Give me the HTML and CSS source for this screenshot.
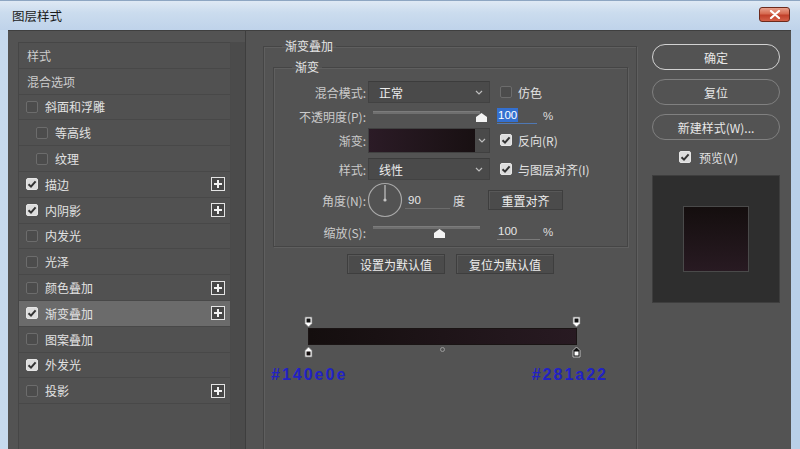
FILE: index.html
```html
<!DOCTYPE html>
<html lang="zh">
<head>
<meta charset="utf-8">
<title>图层样式</title>
<link rel="stylesheet" href="styles.css">
</head>
<body>
<div class="window">
  <div class="titlebar">
    <span class="title">图层样式</span>
    <span class="close"><svg width="12" height="9" viewBox="0 0 12 9"><path d="M2 1 L10 8 M10 1 L2 8" stroke="#fff" stroke-width="2.2" stroke-linecap="round"/></svg></span>
  </div>
  <div class="frame">
    <div class="main">
      <div class="left">
        <div class="list">
          <div class="row plain">样式</div>
          <div class="row plain">混合选项</div>
          <div class="row"><span class="cb"></span>斜面和浮雕</div>
          <div class="row sub"><span class="cb"></span>等高线</div>
          <div class="row sub"><span class="cb"></span>纹理</div>
          <div class="row"><span class="cb on"><svg width="12" height="12" viewBox="0 0 12 12"><path d="M2.5 6.2 L5 8.6 L9.6 3.4" fill="none" stroke="#333" stroke-width="2"/></svg></span>描边<span class="plus"></span></div>
          <div class="row"><span class="cb on"><svg width="12" height="12" viewBox="0 0 12 12"><path d="M2.5 6.2 L5 8.6 L9.6 3.4" fill="none" stroke="#333" stroke-width="2"/></svg></span>内阴影<span class="plus"></span></div>
          <div class="row"><span class="cb"></span>内发光</div>
          <div class="row"><span class="cb"></span>光泽</div>
          <div class="row"><span class="cb"></span>颜色叠加<span class="plus"></span></div>
          <div class="row selected"><span class="cb on"><svg width="12" height="12" viewBox="0 0 12 12"><path d="M2.5 6.2 L5 8.6 L9.6 3.4" fill="none" stroke="#333" stroke-width="2"/></svg></span>渐变叠加<span class="plus"></span></div>
          <div class="row"><span class="cb"></span>图案叠加</div>
          <div class="row"><span class="cb on"><svg width="12" height="12" viewBox="0 0 12 12"><path d="M2.5 6.2 L5 8.6 L9.6 3.4" fill="none" stroke="#333" stroke-width="2"/></svg></span>外发光</div>
          <div class="row"><span class="cb"></span>投影<span class="plus"></span></div>
        </div>
        <div class="scroll"></div>
      </div>

      <div class="center">
        <fieldset class="group outer">
          <legend>渐变叠加</legend>
          <fieldset class="group inner">
            <legend>渐变</legend>
            <div class="frow r1">
              <span class="lbl">混合模式:</span>
              <span class="select"><span>正常</span><svg class="chev" width="8" height="5" viewBox="0 0 8 5"><path d="M1 1 L4 4 L7 1" fill="none" stroke="#bdbdbd" stroke-width="1.2"/></svg></span>
              <span class="cb cb-r"></span><span class="clbl">仿色</span>
            </div>
            <div class="frow r2">
              <span class="lbl">不透明度(P):</span>
              <span class="slider"><span class="track"></span><span class="thumb t-op"></span></span>
              <span class="num num-op"><span class="hl">100</span></span><span class="pct">%</span>
            </div>
            <div class="frow r3">
              <span class="lbl">渐变:</span>
              <span class="swatch"><span class="grad"></span><span class="drop"><svg width="8" height="5" viewBox="0 0 8 5"><path d="M1 1 L4 4 L7 1" fill="none" stroke="#bdbdbd" stroke-width="1.2"/></svg></span></span>
              <span class="cb on cb-r"><svg width="12" height="12" viewBox="0 0 12 12"><path d="M2.5 6.2 L5 8.6 L9.6 3.4" fill="none" stroke="#333" stroke-width="2"/></svg></span><span class="clbl">反向(R)</span>
            </div>
            <div class="frow r4">
              <span class="lbl">样式:</span>
              <span class="select"><span>线性</span><svg class="chev" width="8" height="5" viewBox="0 0 8 5"><path d="M1 1 L4 4 L7 1" fill="none" stroke="#bdbdbd" stroke-width="1.2"/></svg></span>
              <span class="cb on cb-r"><svg width="12" height="12" viewBox="0 0 12 12"><path d="M2.5 6.2 L5 8.6 L9.6 3.4" fill="none" stroke="#333" stroke-width="2"/></svg></span><span class="clbl">与图层对齐(I)</span>
            </div>
            <div class="frow r5">
              <span class="lbl">角度(N):</span>
              <svg class="dial" width="36" height="36" viewBox="0 0 36 36"><circle cx="18" cy="18" r="16.5" fill="none" stroke="#a9a9a9" stroke-width="1.2"/><path d="M18 3 L18 17" stroke="#c4c4c4" stroke-width="1.2"/><circle cx="18" cy="18" r="1.6" fill="#c4c4c4"/></svg>
              <span class="num num-ang">90</span><span class="deg">度</span>
              <span class="btn btn-align">重置对齐</span>
            </div>
            <div class="frow r6">
              <span class="lbl">缩放(S):</span>
              <span class="slider"><span class="track"></span><span class="thumb t-sc"></span></span>
              <span class="num num-sc">100</span><span class="pct">%</span>
            </div>
          </fieldset>
          <div class="defaults">
            <span class="btn btn-def">设置为默认值</span>
            <span class="btn btn-def">复位为默认值</span>
          </div>
          <div class="editor">
            <div class="bar"></div>
            <svg class="stop top-l" width="9" height="12" viewBox="0 0 9 12"><path d="M1 1 H8 V7.5 L4.5 11 L1 7.5 Z" fill="#fff" stroke="#777" stroke-width="0.8"/><rect x="2.5" y="2.5" width="4" height="4" fill="#111"/></svg>
            <svg class="stop top-r" width="9" height="12" viewBox="0 0 9 12"><path d="M1 1 H8 V7.5 L4.5 11 L1 7.5 Z" fill="#fff" stroke="#777" stroke-width="0.8"/><rect x="2.5" y="2.5" width="4" height="4" fill="#111"/></svg>
            <svg class="stop bot-l" width="9" height="12" viewBox="0 0 9 12"><path d="M4.5 1 L8 4.5 V11 H1 V4.5 Z" fill="#fff" stroke="#777" stroke-width="0.8"/><rect x="2.5" y="5.5" width="4" height="4" fill="#140e0e"/></svg>
            <svg class="stop bot-r" width="9" height="12" viewBox="0 0 9 12"><path d="M4.5 1 L8 4.5 V11 H1 V4.5 Z" fill="#111" stroke="#ddd" stroke-width="0.8"/><rect x="2.5" y="5.5" width="4" height="4" fill="#fff"/></svg>
            <span class="mid"></span>
          </div>
          <div class="hexes"><span>#140e0e</span><span>#281a22</span></div>
        </fieldset>
      </div>

      <div class="right">
        <span class="pill primary">确定</span>
        <span class="pill">复位</span>
        <span class="pill">新建样式(W)...</span>
        <div class="preview-row">
          <span class="cb on"><svg width="12" height="12" viewBox="0 0 12 12"><path d="M2.5 6.2 L5 8.6 L9.6 3.4" fill="none" stroke="#333" stroke-width="2"/></svg></span><span class="clbl">预览(V)</span>
        </div>
        <div class="preview"><div class="square"></div></div>
      </div>
    </div>
  </div>
</div>
</body>
</html>
```

FILE: styles.css
```css
* { box-sizing: border-box; }
html, body { margin: 0; padding: 0; }
body {
  width: 800px;
  height: 449px;
  overflow: hidden;
  font-family: "Noto Sans CJK SC", "Noto Sans", sans-serif;
  font-size: 12px;
  color: #dedede;
  background: #c3d6ec;
}
.window {
  width: 800px;
  height: 449px;
  display: flex;
  flex-direction: column;
  overflow: hidden;
}
.titlebar {
  height: 30px;
  flex: none;
  display: flex;
  align-items: center;
  padding: 0 10px 0 12px;
  background: linear-gradient(to bottom, #dfe9f4 0%, #cbdcee 40%, #bfd3ea 100%);
  border-top: 1px solid #8ea6c2;
}
.title {
  color: #1a1a1a;
  font-size: 12.5px;
  line-height: 16px;
  margin-top: 1px;
}
.close {
  margin-left: auto;
  width: 31px;
  height: 15px;
  margin-top: -3px;
  border-radius: 3px;
  border: 1px solid #6d2a1c;
  background: linear-gradient(to bottom, #e8a08c 0%, #d66a50 45%, #c1402a 55%, #d36048 100%);
  display: flex;
  align-items: center;
  justify-content: center;
}
.frame {
  flex: 1;
  display: flex;
  padding: 0 9px 0 8px;
  background: linear-gradient(to right, #c7daee, #b9cfe8);
}
.main {
  flex: 1;
  display: flex;
  background: #535353;
  border-top: 1px solid #3f3f3f;
  min-height: 0;
}

/* left list */
.left {
  width: 238px;
  flex: none;
  display: flex;
  padding: 11px 0 0 10px;
  border-right: 1px solid #3e3e3e;
}
.list {
  width: 212px;
  background: #515151;
  border-left: 1px solid #464646;
  border-top: 1px solid #464646;
}
.scroll {
  width: 15px;
  background: #4b4b4b;
  border-left: 1px solid #4a4a4a;
}
.row {
  height: 25.8px;
  display: flex;
  align-items: center;
  padding: 0 5px 0 7px;
  border-bottom: 1px solid #484848;
  color: #e2e2e2;
  white-space: nowrap;
}
.row.plain { padding-left: 8px; color: #cdcdcd; }
.row.sub { padding-left: 17px; }
.row.selected { background: #6b6b6b; }
.row .cb { margin-right: 7px; }

.cb {
  width: 12px;
  height: 12px;
  flex: none;
  border-radius: 2px;
  border: 1px solid #6c6c6c;
  background: #4c4c4c;
  display: inline-block;
  position: relative;
}
.cb.on {
  background: #dcdcdc;
  border-color: #e6e6e6;
}
.cb svg { display: block; margin: -1px 0 0 -1px; }
.plus {
  margin-left: auto;
  width: 14px;
  height: 14px;
  flex: none;
  border: 1.5px solid #e4e4e4;
  background:
    linear-gradient(#f2f2f2, #f2f2f2) center / 8px 2px no-repeat,
    linear-gradient(#f2f2f2, #f2f2f2) center / 2px 8px no-repeat,
    #474747;
}

/* center */
.center {
  width: 374px;
  flex: none;
  margin-left: 17px;
  margin-top: 7px;
}
.group {
  margin: 0;
  min-width: 0;
  padding: 0;
  border: 1px solid #454545;
  box-shadow: inset 1px 1px 0 #5f5f5f, 1px 1px 0 #5f5f5f;
}
.group legend {
  padding: 0 3px;
  margin-left: 18px;
  line-height: 16px;
  color: #e4e4e4;
}
.outer {
  height: 460px;
}
.inner {
  margin: 5px 8px 0 9px;
  padding: 6px 0 4px 0;
}
.frow {
  display: flex;
  align-items: center;
  color: #e0e0e0;
  white-space: nowrap;
}
.r1 { height: 22px; margin-bottom: 2px; }
.r2 { height: 22px; margin-bottom: 1px; }
.r3 { height: 24px; margin-bottom: 6px; }
.r4 { height: 22px; margin-bottom: 3px; }
.r5 { height: 34px; margin-bottom: 5px; }
.r6 { height: 20px; }
.lbl {
  width: 92px;
  flex: none;
  text-align: right;
  margin-right: 2px;
  color: #cacaca;
}
.select {
  width: 122px;
  height: 22px;
  flex: none;
  display: flex;
  align-items: center;
  padding: 0 6px 0 10px;
  background: #4a4a4a;
  border: 1px solid #424242;
  border-top-color: #3c3c3c;
  color: #ececec;
}
.chev { margin-left: auto; }
.cb-r { margin-left: 10px; }
.clbl { margin-left: 6px; color: #e2e2e2; }
.slider {
  width: 122px;
  height: 22px;
  flex: none;
  position: relative;
}
.track {
  position: absolute;
  left: 5px;
  top: 6px;
  width: 107px;
  height: 3px;
  background: #6f6f6f;
  border-top: 1px solid #7c7c7c;
}
.thumb {
  position: absolute;
  top: 8px;
  width: 11px;
  height: 9px;
  background: #f4f4f4;
  clip-path: polygon(50% 0, 100% 45%, 100% 100%, 0 100%, 0 45%);
}
.t-op { left: 108px; }
.r6 .slider { height: 20px; }
.r6 .track { top: 4px; }
.t-sc { left: 66px; top: 7px; }
.num {
  flex: none;
  height: 16px;
  line-height: 15px;
  border-bottom: 1px solid #7a7a7a;
  color: #e6e6e6;
  font-family: "Liberation Sans", sans-serif;
  font-size: 11.5px;
}
.num-op { width: 40px; margin-left: 7px; border-bottom-color: #4f78b4; }
.hl { background: #3470d0; color: #fff; padding: 0 1px; display: inline-block; line-height: 14px; }
.num-sc { width: 43px; margin-left: 7px; padding-left: 1px; }
.pct { margin-left: 6px; color: #dedede; font-family: "Liberation Sans", sans-serif; font-size: 11.5px; }
.r6 .pct { margin-left: 3px; }
.swatch {
  width: 122px;
  height: 25px;
  flex: none;
  display: flex;
  background: #4a4a4a;
  border: 1px solid #404040;
}
.grad {
  width: 106px;
  background: linear-gradient(to right, #2b1b26, #181012);
}
.drop {
  flex: 1;
  display: flex;
  align-items: center;
  justify-content: center;
}
.dial { flex: none; margin-left: -1px; }
.num-ang { width: 45px; margin-left: 2px; padding-left: 3px; margin-top: 2px; border-bottom-color: #6c6c6c; }
.deg { margin-left: 3px; color: #dedede; }
.btn {
  flex: none;
  height: 20px;
  display: inline-flex;
  align-items: center;
  justify-content: center;
  background: #4b4b4b;
  border: 1px solid #3e3e3e;
  box-shadow: inset 1px 1px 0 #585858;
  color: #ededed;
}
.btn-align { width: 75px; margin-left: 23px; }
.defaults {
  display: flex;
  justify-content: center;
  gap: 11px;
  margin-top: 7px;
  padding-left: 1px;
}
.btn-def { width: 98px; }

.editor {
  position: relative;
  width: 269px;
  height: 17px;
  margin: 54px 0 0 44px;
}
.bar {
  height: 17px;
  background: linear-gradient(to right, #140e0e, #281a22);
  border: 1px solid #1a1414;
}
.stop { position: absolute; display: block; }
.top-l { left: -4px; top: -12px; }
.top-r { right: -4px; top: -12px; }
.bot-l { left: -4px; top: 18px; }
.bot-r { right: -4px; top: 18px; }
.mid {
  position: absolute;
  left: 132px;
  top: 19px;
  width: 5px;
  height: 5px;
  border: 1px solid #9a9a9a;
  border-radius: 50%;
}
.hexes {
  display: flex;
  justify-content: space-between;
  width: 337px;
  margin: 20px 0 0 7px;
  font-family: "Liberation Sans", sans-serif;
  font-weight: bold;
  font-size: 16px;
  letter-spacing: 2px;
  line-height: 20px;
  color: #2222c4;
}

/* right */
.right {
  flex: 1;
  display: flex;
  flex-direction: column;
  padding: 13px 10px 0 15px;
}
.pill {
  width: 128px;
  height: 26px;
  flex: none;
  margin-bottom: 9px;
  border-radius: 13px;
  border: 1.5px solid #808080;
  display: flex;
  align-items: center;
  justify-content: center;
  color: #e8e8e8;
}
.pill.primary { border-color: #d2d2d2; }
.preview-row {
  height: 16px;
  display: flex;
  align-items: center;
  padding-left: 27px;
}
.preview-row .clbl { margin-left: 8px; }
.preview {
  width: 128px;
  height: 128px;
  margin-top: 10px;
  background: #2e2e2e;
  border: 1px solid #3e3e3e;
  display: flex;
  align-items: center;
  justify-content: center;
}
.square {
  width: 66px;
  height: 66px;
  border: 1px solid #4a4a4a;
  background: linear-gradient(to bottom, #140e0e, #281a22);
}
```
